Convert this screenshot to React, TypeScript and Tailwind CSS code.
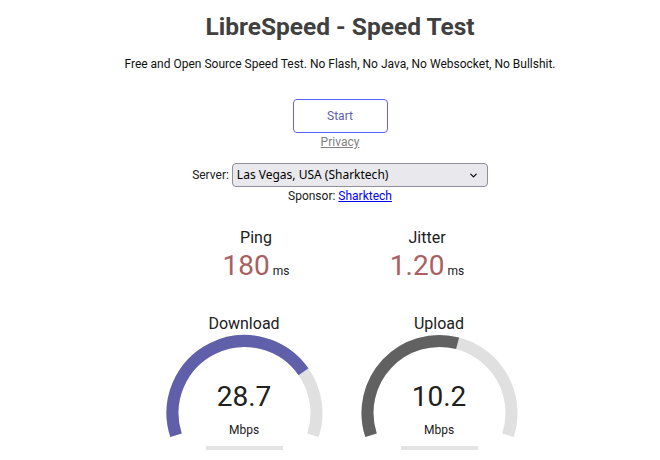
import { ChevronDown } from 'lucide-react';

const ARC_START = -198;
const ARC_SPAN = 216;

const point = (cx: number, cy: number, r: number, deg: number) => {
  const a = (deg * Math.PI) / 180;
  return [cx + r * Math.cos(a), cy + r * Math.sin(a)];
};

const arcPath = (cx: number, cy: number, r: number, from: number, to: number) => {
  const [x1, y1] = point(cx, cy, r, from);
  const [x2, y2] = point(cx, cy, r, to);
  const large = to - from > 180 ? 1 : 0;
  return `M ${x1} ${y1} A ${r} ${r} 0 ${large} 1 ${x2} ${y2}`;
};

// same curve LibreSpeed uses to map speed onto the gauge
const mbpsToAmount = (s: number) => 1 - 1 / Math.pow(1.3, Math.sqrt(s));

interface GaugeProps {
  label: string;
  value: string;
  color: string;
}

const Gauge = ({ label, value, color }: GaugeProps) => {
  const cx = 97.5;
  const cy = 79;
  const r = 72;
  const amount = mbpsToAmount(parseFloat(value));
  return (
    <div className="flex w-[195px] flex-col items-center">
      <div className="text-[16px] leading-[20px] text-[#202020]">{label}</div>
      <div className="relative h-[126px] w-[195px]">
        <svg width="195" height="126" viewBox="0 0 195 126" className="block">
          <path d={arcPath(cx, cy, r, ARC_START, ARC_START + ARC_SPAN)} fill="none" stroke="#E0E0E0" strokeWidth="12" />
          <path d={arcPath(cx, cy, r, ARC_START, ARC_START + ARC_SPAN * amount)} fill="none" stroke={color} strokeWidth="12" />
          <rect x="59" y="112" width="77" height="4" fill="#E3E3E3" />
        </svg>
        <div className="absolute left-0 right-0 top-[46px] text-center text-[28px] leading-[34px] text-[#202020]">
          {value}
        </div>
        <div className="absolute left-0 right-0 top-[89px] text-center text-[12px] leading-[14px] text-[#202020]">
          Mbps
        </div>
      </div>
    </div>
  );
};

const Stat = ({ label, value }: { label: string; value: string }) => (
  <div className="flex w-[171px] flex-col items-center">
    <div className="text-[16px] leading-[20px] text-[#202020]">{label}</div>
    <div className="mt-[1px] flex items-baseline text-[#AA6060]">
      <span className="text-[28px] leading-[34px]">{value}</span>
      <span className="ml-[3px] text-[12px] text-[#202020]">ms</span>
    </div>
  </div>
);

export default function App() {
  return (
    <div className="h-[460px] w-[660px] overflow-hidden bg-white font-['Roboto',sans-serif]">
      <div className="flex w-[680px] flex-col items-center">
        <h1 className="mt-[13px] text-[24.5px] font-bold leading-[28px] text-[#404040]">LibreSpeed - Speed Test</h1>
        <p className="mt-[15px] text-[12px] leading-[16px] text-[#111]">
          Free and Open Source Speed Test. No Flash, No Java, No Websocket, No Bullshit.
        </p>
        <button className="mt-[27px] h-[34px] w-[95px] rounded-[4px] border-[1.5px] border-[#6060FF] text-[12px] text-[#6060AA]">
          Start
        </button>
        <a href="#" className="mt-[2px] text-[12px] leading-[14px] text-[#808080] underline">
          Privacy
        </a>
        <div className="mt-[14px] flex items-center gap-[3px] text-[12px] text-[#202020]">
          <span>Server:</span>
          <div className="flex h-[24px] w-[256px] items-center justify-between rounded-[4px] border border-[#8f8f9d] bg-[#e9e9ed] pl-[4px] pr-[8px] font-['Noto_Sans',sans-serif] text-[12px] text-black">
            <span>Las Vegas, USA (Sharktech)</span>
            <ChevronDown size={11} strokeWidth={2.5} />
          </div>
        </div>
        <div className="mt-[1px] text-[12px] leading-[16px] text-[#202020]">
          Sponsor: <a href="#" className="text-[#0000EE] underline">Sharktech</a>
        </div>
        <div className="mt-[24px] flex pl-[3px]">
          <Stat label="Ping" value="180" />
          <Stat label="Jitter" value="1.20" />
        </div>
        <div className="mt-[31px] flex pl-[3px]">
          <Gauge label="Download" value="28.7" color="#6060AA" />
          <Gauge label="Upload" value="10.2" color="#616161" />
        </div>
      </div>
    </div>
  );
}
